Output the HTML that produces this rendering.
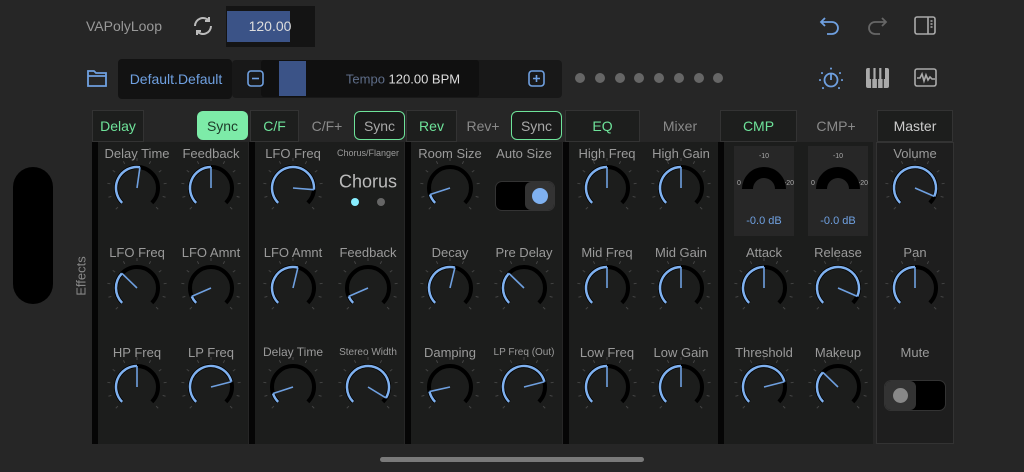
<!DOCTYPE html>
<html><head><meta charset="utf-8"><style>
*{margin:0;padding:0;box-sizing:border-box}
body{width:1024px;height:472px;background:#262626;font-family:"Liberation Sans",sans-serif;position:relative;overflow:hidden;color:#9a9a9a}
.a{position:absolute}
.t{position:absolute;transform:translate(-50%,-50%);white-space:nowrap}
.panel{position:absolute;top:142px;height:302px;background:#1c1d1c}
.bar{position:absolute;top:142px;height:302px;width:6px;background:#050505}
.tab{position:absolute;top:110px;height:32px;background:#1d1e1d;border:1px solid #333;color:#6ee39a;font-size:14px;display:flex;align-items:center;justify-content:center}
.tx{position:absolute;top:110px;height:32px;color:#8a8a8a;font-size:14px;display:flex;align-items:center;justify-content:center;transform:translateX(-50%)}
.sync{position:absolute;top:111px;height:29px;border:1.5px solid #6ee39a;border-radius:6px;color:#a8a8a8;font-size:14px;display:flex;align-items:center;justify-content:center;background:#1a1a1a}
.lb{position:absolute;transform:translateX(-50%);font-size:13px;color:#9a9a9a;white-space:nowrap}
.k{position:absolute;width:64px;height:64px;transform:translate(-50%,-50%)}
.dot{position:absolute;width:10px;height:10px;border-radius:50%;background:#666;top:73px}
.meter{position:absolute;top:146px;width:60px;height:90px;background:#272727}
</style></head><body>
<div class="t" style="left:124px;top:26px;font-size:14px;color:#999">VAPolyLoop</div>
<svg class="a" style="left:191px;top:14px" width="24" height="24" viewBox="0 0 24 24" fill="none" stroke="#bbb" stroke-width="2"><path d="M4 12a8 8 0 0 1 14-5.3M20 12a8 8 0 0 1-14 5.3"/><path d="M18 3v4h-4M6 21v-4h4"/></svg>
<div class="a" style="left:226px;top:6px;width:89px;height:41px;background:#141414"></div>
<div class="a" style="left:227px;top:11px;width:63px;height:31px;background:#3b5387"></div>
<div class="t" style="left:270px;top:26px;font-size:14px;color:#ddd">120.00</div>

<svg class="a" style="left:86px;top:68px" width="22" height="20" viewBox="0 0 22 20" fill="none" stroke="#6fa0e0" stroke-width="1.8"><path d="M2 3h6l2 2h10v13H2zM2 8h18"/></svg>
<div class="a" style="left:118px;top:59px;width:114px;height:40px;background:#121212;border-radius:4px"></div>
<div class="t" style="left:176px;top:79px;font-size:14px;color:#6fa0e0">Default.Default</div>
<div class="a" style="left:232px;top:60px;width:330px;height:38px;background:#181818;border-radius:4px"></div>
<div class="a" style="left:261px;top:60px;width:218px;height:37px;background:#101010;border-radius:3px"></div>
<div class="a" style="left:279px;top:61px;width:27px;height:35px;background:#3b5387"></div>
<svg class="a" style="left:247px;top:70px" width="18" height="18"><rect x="1" y="1" width="15" height="15" rx="3" fill="none" stroke="#6fa0e0" stroke-width="1.6"/><path d="M5 8.5h7" stroke="#6fa0e0" stroke-width="1.6"/></svg>
<svg class="a" style="left:528px;top:70px" width="18" height="18"><rect x="1" y="1" width="15" height="15" rx="3" fill="none" stroke="#6fa0e0" stroke-width="1.6"/><path d="M5 8.5h7M8.5 5v7" stroke="#6fa0e0" stroke-width="1.6"/></svg>
<div class="t" style="left:403px;top:79px;font-size:13px;color:#ddd"><span style="color:#5e6d88">Tempo</span> 120.00 BPM</div>
<div class="dot" style="left:575px"></div><div class="dot" style="left:595px"></div><div class="dot" style="left:615px"></div><div class="dot" style="left:634px"></div><div class="dot" style="left:654px"></div><div class="dot" style="left:674px"></div><div class="dot" style="left:694px"></div><div class="dot" style="left:713px"></div>

<svg class="a" style="left:819px;top:15px" width="22" height="22" viewBox="0 0 22 22" fill="none" stroke="#6fa0e0" stroke-width="1.8"><path d="M6 3L2 7l4 4M2 7h11a6 6 0 0 1 0 12H8"/></svg>
<svg class="a" style="left:866px;top:15px" width="22" height="22" viewBox="0 0 22 22" fill="none" stroke="#666" stroke-width="1.8"><path d="M16 3l4 4-4 4M20 7H9a6 6 0 0 0 0 12h5"/></svg>
<svg class="a" style="left:914px;top:16px" width="23" height="20" viewBox="0 0 23 20" fill="none" stroke="#aaa" stroke-width="1.6"><rect x="1" y="1" width="20" height="17" rx="2"/><path d="M14 1v17M16.5 5h2M16.5 8h2M16.5 11h2"/></svg>
<svg class="a" style="left:818px;top:66px" width="26" height="26" viewBox="0 0 26 26" fill="none" stroke="#6fa0e0" stroke-width="1.8"><circle cx="13" cy="14" r="6.5"/><path d="M13 8v6"/><g stroke-width="2" stroke-linecap="round"><path d="M13 2.5v.1M4 7v.1M22 7v.1M2 14v.1M24 14v.1M5 22v.1M21 22v.1"/></g></svg>
<svg class="a" style="left:866px;top:68px" width="23" height="20" viewBox="0 0 23 20"><rect x="0" y="0" width="23" height="20" rx="2" fill="#aaa"/><path d="M5.7 0v20M11.5 0v20M17.2 0v20" stroke="#262626" stroke-width="1.2"/><rect x="3.8" y="0" width="3.6" height="11" fill="#262626"/><rect x="9.6" y="0" width="3.6" height="11" fill="#262626"/><rect x="15.4" y="0" width="3.6" height="11" fill="#262626"/></svg>
<svg class="a" style="left:914px;top:68px" width="23" height="20" viewBox="0 0 23 20" fill="none" stroke="#aaa" stroke-width="1.6"><rect x="1" y="1" width="21" height="17" rx="2"/><path d="M3 10h3l2-4 2 7 2-6 2 5 2-3 2 2h3"/></svg>

<div class="a" style="left:13px;top:167px;width:40px;height:137px;border-radius:20px;background:#000"></div>
<div class="t" style="left:81px;top:276px;transform:translate(-50%,-50%) rotate(-90deg);font-size:13px;color:#888">Effects</div>

<div class="panel" style="left:92px;width:156px"></div><div class="bar" style="left:92px"></div>
<div class="panel" style="left:250px;width:154px"></div><div class="bar" style="left:249px"></div>
<div class="panel" style="left:406px;width:156px"></div><div class="bar" style="left:405px"></div>
<div class="panel" style="left:564px;width:154px"></div><div class="bar" style="left:563px"></div>
<div class="panel" style="left:720px;width:153px"></div><div class="bar" style="left:718px"></div>
<div class="panel" style="left:876px;width:78px;background:#1e1e1e;border:1px solid #333"></div>

<div class="tab" style="left:92px;width:52px">Delay</div>
<div class="a" style="left:197px;top:111px;width:51px;height:29px;background:#7deba8;border-radius:6px;color:#173;font-size:14px;display:flex;align-items:center;justify-content:center;color:#1d3a28">Sync</div>
<div class="tab" style="left:250px;width:49px">C/F</div>
<div class="tx" style="left:327px">C/F+</div>
<div class="sync" style="left:354px;width:51px">Sync</div>
<div class="tab" style="left:406px;width:51px">Rev</div>
<div class="tx" style="left:483px">Rev+</div>
<div class="sync" style="left:511px;width:51px">Sync</div>
<div class="tab" style="left:565px;width:75px">EQ</div>
<div class="tx" style="left:680px">Mixer</div>
<div class="tab" style="left:720px;width:77px">CMP</div>
<div class="tx" style="left:836px">CMP+</div>
<div class="tab" style="left:877px;width:76px;color:#ccc">Master</div>

<div class="lb" style="left:137px;top:146px">Delay Time</div><div class="lb" style="left:211px;top:146px">Feedback</div>
<div class="lb" style="left:137px;top:245px">LFO Freq</div><div class="lb" style="left:211px;top:245px">LFO Amnt</div>
<div class="lb" style="left:137px;top:345px">HP Freq</div><div class="lb" style="left:211px;top:345px">LP Freq</div>
<div class="lb" style="left:293px;top:146px">LFO Freq</div><div class="lb" style="left:368px;top:148px;font-size:9px">Chorus/Flanger</div>
<div class="t" style="left:368px;top:182px;font-size:18px;color:#bbb">Chorus</div>
<div class="a" style="left:351px;top:198px;width:8px;height:8px;border-radius:50%;background:#8ef"></div>
<div class="a" style="left:377px;top:198px;width:8px;height:8px;border-radius:50%;background:#666"></div>
<div class="lb" style="left:293px;top:245px">LFO Amnt</div><div class="lb" style="left:368px;top:245px">Feedback</div>
<div class="lb" style="left:293px;top:345px;font-size:12px">Delay Time</div><div class="lb" style="left:368px;top:347px;font-size:10px">Stereo Width</div>
<div class="lb" style="left:450px;top:146px">Room Size</div><div class="lb" style="left:524px;top:146px">Auto Size</div>
<div class="a" style="left:495px;top:181px;width:60px;height:30px;border-radius:7px;background:#000;border:1px solid #333"></div>
<div class="a" style="left:525px;top:182px;width:29px;height:28px;border-radius:6px;background:#333"></div>
<div class="a" style="left:532px;top:188px;width:16px;height:16px;border-radius:50%;background:#7fb1f0"></div>
<div class="lb" style="left:450px;top:245px">Decay</div><div class="lb" style="left:524px;top:245px">Pre Delay</div>
<div class="lb" style="left:450px;top:345px">Damping</div><div class="lb" style="left:524px;top:347px;font-size:10px">LP Freq (Out)</div>
<div class="lb" style="left:607px;top:146px">High Freq</div><div class="lb" style="left:681px;top:146px">High Gain</div>
<div class="lb" style="left:607px;top:245px">Mid Freq</div><div class="lb" style="left:681px;top:245px">Mid Gain</div>
<div class="lb" style="left:607px;top:345px">Low Freq</div><div class="lb" style="left:681px;top:345px">Low Gain</div>
<div class="meter" style="left:734px"></div><div class="meter" style="left:808px"></div>
<svg class="a" style="left:734px;top:146px" width="60" height="90"><text x="30" y="12" fill="#aaa" font-size="7" text-anchor="middle" font-family="Liberation Sans">-10</text><text x="5" y="39" fill="#aaa" font-size="7" text-anchor="middle" font-family="Liberation Sans">0</text><text x="55" y="39" fill="#aaa" font-size="7" text-anchor="middle" font-family="Liberation Sans">-20</text><path d="M8 43A22 22 0 0 1 52 43H41A11 11 0 0 0 19 43Z" fill="#000"/><text x="30" y="78" fill="#6fa0e0" font-size="11" text-anchor="middle" font-family="Liberation Sans">-0.0 dB</text></svg>
<svg class="a" style="left:808px;top:146px" width="60" height="90"><text x="30" y="12" fill="#aaa" font-size="7" text-anchor="middle" font-family="Liberation Sans">-10</text><text x="5" y="39" fill="#aaa" font-size="7" text-anchor="middle" font-family="Liberation Sans">0</text><text x="55" y="39" fill="#aaa" font-size="7" text-anchor="middle" font-family="Liberation Sans">-20</text><path d="M8 43A22 22 0 0 1 52 43H41A11 11 0 0 0 19 43Z" fill="#000"/><text x="30" y="78" fill="#6fa0e0" font-size="11" text-anchor="middle" font-family="Liberation Sans">-0.0 dB</text></svg>
<div class="lb" style="left:764px;top:245px">Attack</div><div class="lb" style="left:838px;top:245px">Release</div>
<div class="lb" style="left:764px;top:345px">Threshold</div><div class="lb" style="left:838px;top:345px">Makeup</div>
<div class="lb" style="left:915px;top:146px">Volume</div><div class="lb" style="left:915px;top:245px">Pan</div><div class="lb" style="left:915px;top:345px">Mute</div>
<div class="a" style="left:884px;top:380px;width:62px;height:31px;border-radius:7px;background:#000;border:1px solid #333"></div>
<div class="a" style="left:885px;top:381px;width:31px;height:29px;border-radius:6px;background:#333"></div>
<div class="a" style="left:893px;top:388px;width:15px;height:15px;border-radius:50%;background:#888"></div>

<div class="a" style="left:380px;top:457px;width:264px;height:5px;border-radius:3px;background:#7a7a7a"></div>

<div id="knobs"></div>
<script>
var K=[[137,188,.53],[211,188,.5],[137,288,.33],[211,288,.08],[137,387,.5],[211,387,.78],
[293,188,.85],[293,288,.55],[368,288,.08],[293,387,.1],[368,387,.95],
[450,188,.1],[450,288,.55],[524,288,.33],[450,387,.12],[524,387,.78],
[607,188,.5],[681,188,.5],[607,288,.5],[681,288,.5],[607,387,.5],[681,387,.5],
[764,288,.5],[838,288,.92],[764,387,.78],[838,387,.33],[915,188,.92],[915,288,.5]];
function p(a,r){a=a*Math.PI/180;return [32+r*Math.cos(a),32-r*Math.sin(a)];}
function arc(a0,a1,r){var s=p(a0,r),e=p(a1,r),l=(a0-a1)>180?1:0;return 'M'+s[0].toFixed(2)+' '+s[1].toFixed(2)+'A'+r+' '+r+' 0 '+l+' 1 '+e[0].toFixed(2)+' '+e[1].toFixed(2);}
var h='';
K.forEach(function(k){var a=225-270*k[2],s='';
for(var i=0;i<=10;i++){var t=225-27*i,q=p(t,27),w=p(t,30);s+='<path d="M'+q[0]+' '+q[1]+'L'+w[0]+' '+w[1]+'" stroke="#444" stroke-width="1"/>';}
s+='<path d="'+arc(225,-45,21)+'" stroke="#000" stroke-width="4" fill="none"/>';
if(k[2]>0.005)s+='<path d="'+arc(225,a,21)+'" stroke="#7fb1f0" stroke-width="2.5" fill="none"/>';
var e=p(a,21),c=p(a+90,1.3),d=p(a-90,1.3);
s+='<path d="M32 32L'+e[0]+' '+e[1]+'" stroke="#6fa0e0" stroke-width="1.6"/>';
h+='<svg class="k" style="left:'+k[0]+'px;top:'+k[1]+'px" viewBox="0 0 64 64">'+s+'</svg>';});
document.getElementById('knobs').innerHTML=h;
</script>
</body></html>
